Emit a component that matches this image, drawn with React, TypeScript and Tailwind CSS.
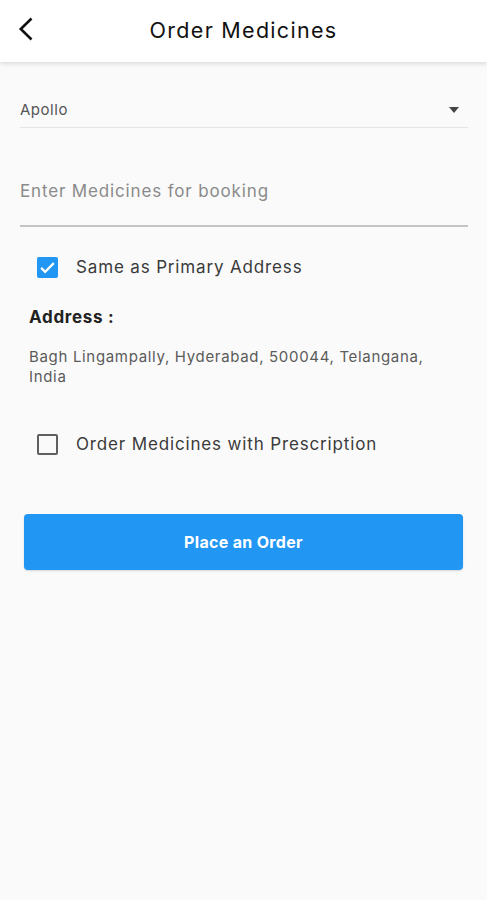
import { useState } from "react";

function Check({ on, onClick }: { on: boolean; onClick: () => void }) {
  return (
    <button
      type="button"
      onClick={onClick}
      className={
        "w-[21px] h-[21px] rounded-[2px] flex items-center justify-center shrink-0 " +
        (on ? "bg-[#2196f3]" : "border-2 border-[#5f5f5f]")
      }
    >
      {on ? (
        <svg width="19" height="19" viewBox="0 0 24 24" fill="none">
          <path d="M4 12.5l5 5L20 6.5" stroke="white" strokeWidth="2.8" />
        </svg>
      ) : null}
    </button>
  );
}

export default function App() {
  const [same, setSame] = useState(true);
  const [withRx, setWithRx] = useState(false);

  return (
    <div className="w-[487px] h-[900px] bg-[#fafafa] font-['Inter',sans-serif] text-[#222]">
      {/* app bar */}
      <header className="h-[62px] bg-white shadow-[0_2px_4px_rgba(0,0,0,0.12)] relative flex items-center justify-center">
        <button className="absolute left-[18px] top-[17px] w-[16px] h-[24px]">
          <svg width="16" height="24" viewBox="0 0 16 24" fill="none">
            <path d="M13.5 1.5L2.8 12l10.7 10.5" stroke="#111" strokeWidth="2.6" />
          </svg>
        </button>
        <h1 className="text-[21.5px] text-[#111] mt-[-2px] tracking-[0.06em]">Order Medicines</h1>
      </header>

      <main className="px-[20px]">
        {/* store select */}
        <div className="mt-[33px] h-[33px] border-b border-[#e4e4e4] mr-[-1px] flex items-start justify-between">
          <span className="text-[15px] text-[#555] leading-[28px] pt-[1px] tracking-[0.035em]">Apollo</span>
          <svg width="10" height="6" viewBox="0 0 10 6" className="mt-[12px] mr-[9px]">
            <path d="M0 0h10L5 6z" fill="#444" />
          </svg>
        </div>

        {/* medicines input */}
        <div className="mt-[41px] h-[58px] border-b-2 border-[#c4c4c4] mr-[-1px]">
          <input
            placeholder="Enter Medicines for booking"
            className="w-full bg-transparent outline-none text-[17px] leading-[44px] tracking-[0.05em] placeholder:text-[#8a8a8a]"
          />
        </div>

        {/* same as primary */}
        <label className="mt-[28px] ml-[17px] flex items-center gap-[18px]">
          <Check on={same} onClick={() => setSame(!same)} />
          <span className="text-[17px] text-[#3a3a3a] tracking-[0.05em]">Same as Primary Address</span>
        </label>

        <div className="pl-[9px] pr-[20px]">
          <h2 className="mt-[24px] text-[17px] font-bold text-[#222] tracking-[0.04em]">Address :</h2>
          <p className="mt-[17px] text-[15px] leading-[20px] text-[#5a5a5a] tracking-[0.045em]">
            Bagh Lingampally, Hyderabad, 500044, Telangana, India
          </p>
        </div>

        <label className="mt-[45px] ml-[17px] flex items-center gap-[18px]">
          <Check on={withRx} onClick={() => setWithRx(!withRx)} />
          <span className="text-[17px] text-[#3a3a3a] tracking-[0.05em]">Order Medicines with Prescription</span>
        </label>

        <button className="mt-[56px] ml-[4px] w-[439px] h-[56px] rounded-[4px] bg-[#2196f3] text-white text-[16px] font-bold tracking-[0.02em] shadow-[0_1px_2px_rgba(0,0,0,0.15)]">
          Place an Order
        </button>
      </main>
    </div>
  );
}
